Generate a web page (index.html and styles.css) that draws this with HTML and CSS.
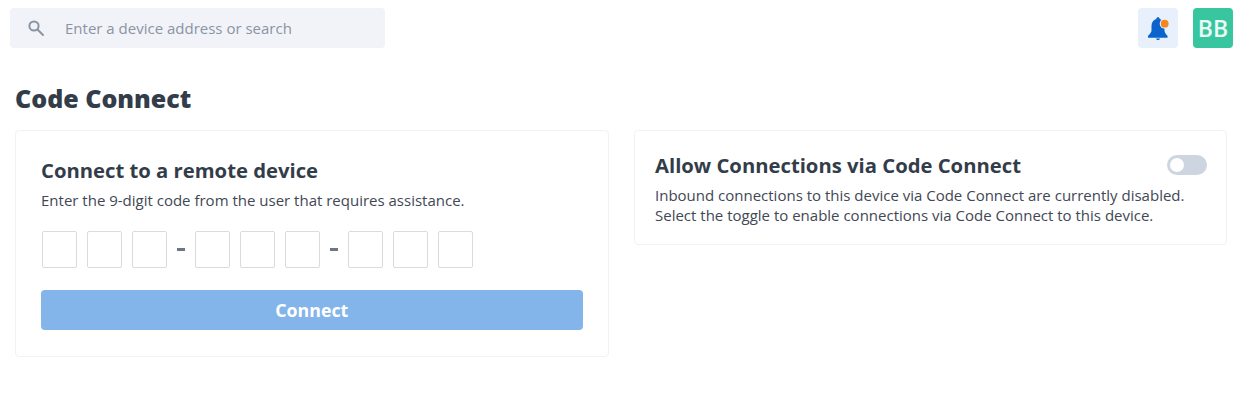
FILE: index.html
```html
<!DOCTYPE html>
<html lang="en">
<head>
    <meta charset="UTF-8">
    <meta name="viewport" content="width=device-width, initial-scale=1.0">
    <title>Code Connect</title>
    <link rel="stylesheet" href="styles.css">
</head>
<body>
    <header class="topbar">
        <div class="search">
            <svg class="search-icon" width="18" height="18" viewBox="0 0 18 18" fill="none" stroke="#8a94a3" stroke-width="2">
                <circle cx="7" cy="7" r="4.6"/>
                <path d="M10.5 10.5 L16 16" stroke-linecap="round"/>
            </svg>
            <span class="search-text">Enter a device address or search</span>
        </div>
        <div class="topbar-right">
            <div class="bell">
                <svg width="24" height="24" viewBox="0 0 24 24">
                    <path fill="#0b63ce" d="M12 1.200c1 0 1.700.7 1.700 1.700 3.400 1 4.800 3.700 4.800 7v4.300c0 2 1 3.800 3 5.500v2H2v-2c2-1.700 3.500-3.500 3.500-5.500V9.900c0-3.300 1.400-6 4.800-7 0-1 .7-1.700 1.700-1.700z"/>
                    <path fill="#0b63ce" d="M10 22.500h4c0 .9-.9 1.500-2 1.500s-2-.6-2-1.500z"/>
                    <circle cx="18.700" cy="7.700" r="5" fill="#e8f0fb"/>
                    <circle cx="18.700" cy="7.700" r="3.900" fill="#f5861f"/>
                </svg>
            </div>
            <div class="avatar">BB</div>
        </div>
    </header>

    <main class="content">
        <h1>Code Connect</h1>
        <div class="columns">
            <section class="card card-connect">
                <h2>Connect to a remote device</h2>
                <p>Enter the 9-digit code from the user that requires assistance.</p>
                <div class="code-row">
                    <span class="code-box"></span>
                    <span class="code-box"></span>
                    <span class="code-box"></span>
                    <span class="code-dash"></span>
                    <span class="code-box"></span>
                    <span class="code-box"></span>
                    <span class="code-box"></span>
                    <span class="code-dash"></span>
                    <span class="code-box"></span>
                    <span class="code-box"></span>
                    <span class="code-box"></span>
                </div>
                <button class="connect-btn">Connect</button>
            </section>
            <section class="card card-allow">
                <div class="allow-head">
                    <h2>Allow Connections via Code Connect</h2>
                    <span class="toggle"><span class="toggle-knob"></span></span>
                </div>
                <p>Inbound connections to this device via Code Connect are currently disabled.<br>Select the toggle to enable connections via Code Connect to this device.</p>
            </section>
        </div>
    </main>
</body>
</html>
```

FILE: styles.css
```css
body {
    margin: 0;
    background: #fff;
    font-family: "Open Sans", "Noto Sans", sans-serif;
    color: #333d4a;
}
.topbar {
    display: flex;
    justify-content: space-between;
    padding: 8px 3px 0 10px;
}
.search {
    width: 375px;
    height: 40px;
    display: flex;
    align-items: center;
    background: #f1f3f8;
    border-radius: 4px;
}
.search-icon {
    margin-left: 17px;
}
.search-text {
    margin-left: 20px;
    font-size: 15px;
    color: #8a94a3;
}
.topbar-right {
    display: flex;
    gap: 15px;
}
.bell {
    width: 40px;
    height: 40px;
    display: flex;
    align-items: center;
    justify-content: center;
    background: #e8f0fb;
    border-radius: 4px;
}
.avatar {
    width: 40px;
    height: 40px;
    display: flex;
    align-items: center;
    justify-content: center;
    background: #38c6a0;
    border-radius: 4px;
    color: #eafaf5;
    font-size: 23px;
    font-weight: 600;
}
.content {
    padding: 0 9px 0 15px;
}
h1 {
    margin: 33px 0 15px;
    font-size: 25px;
    line-height: 34px;
    font-weight: 800;
}
.columns {
    display: flex;
    align-items: flex-start;
    gap: 25px;
}
.card {
    box-sizing: border-box;
    background: #fff;
    border: 1px solid #f1f2f6;
    border-radius: 4px;
}
.card h2 {
    margin: 0;
    font-size: 20.25px;
    font-weight: 700;
    line-height: 26px;
}
.card p {
    margin: 0;
    font-size: 15px;
    line-height: 20px;
    color: #3f4854;
}
.card-connect {
    width: 594px;
    height: 227px;
    padding: 26px 25px 0;
}
.card-connect p {
    margin-top: 7px;
}
.code-row {
    display: flex;
    align-items: center;
    gap: 10px;
    margin: 21px 0 0 1px;
}
.code-box {
    box-sizing: border-box;
    width: 35px;
    height: 37px;
    border: 1px solid #d9dbdf;
    border-radius: 2px;
}
.code-dash {
    width: 8px;
    height: 3px;
    background: #6c7687;
}
.connect-btn {
    display: block;
    width: 100%;
    height: 40px;
    margin-top: 22px;
    border: none;
    border-radius: 4px;
    background: #84b5ea;
    color: #fff;
    font-family: inherit;
    font-size: 17.8px;
    font-weight: 700;
}
.card-allow {
    width: 594px;
    height: 115px;
    padding: 21px 19px 0 20.5px;
}
.allow-head {
    display: flex;
    justify-content: space-between;
    align-items: center;
    margin-bottom: 6.5px;
}
.toggle {
    width: 40px;
    height: 20px;
    display: block;
    background: #cdd5e1;
    border-radius: 10px;
}
.toggle-knob {
    display: block;
    width: 14px;
    height: 14px;
    margin: 3px;
    background: #fff;
    border-radius: 50%;
}
```
